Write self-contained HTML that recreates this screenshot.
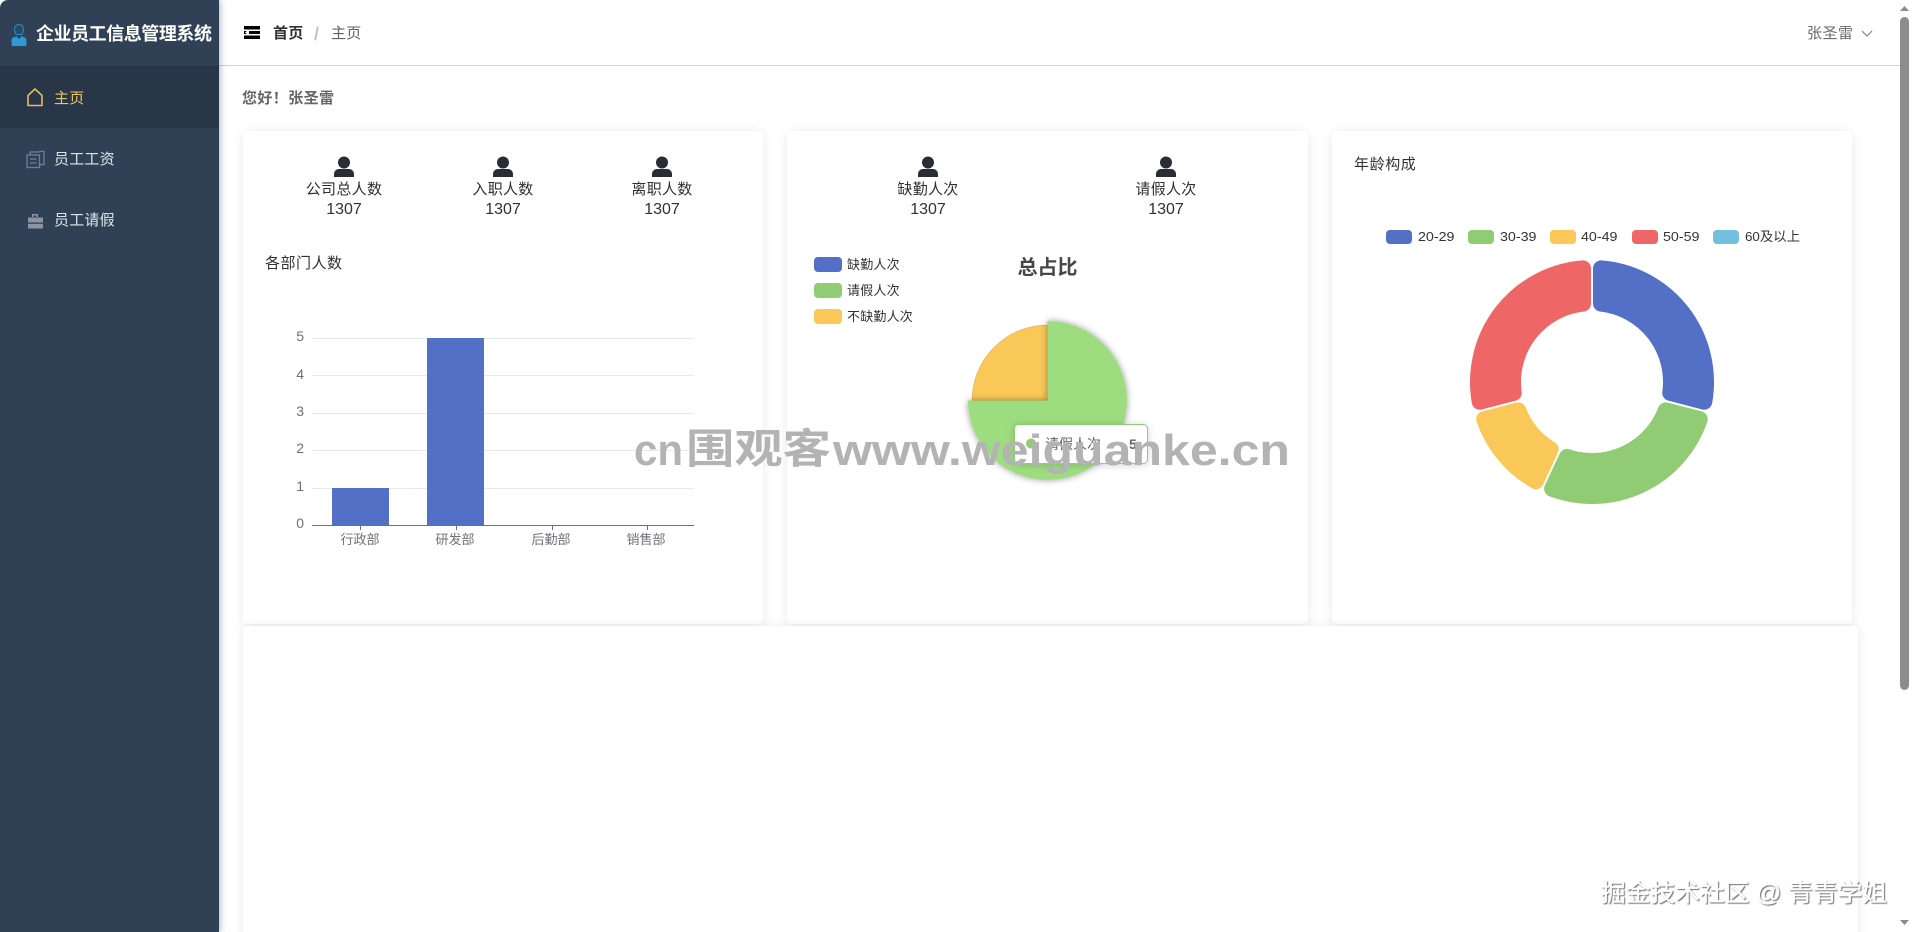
<!DOCTYPE html>
<html lang="zh-CN">
<head>
<meta charset="utf-8">
<title>企业员工信息管理系统</title>
<style>
html,body{margin:0;padding:0;width:1912px;height:932px;overflow:hidden;background:#fff;}
body{position:relative;font-family:"Liberation Sans","Noto Sans CJK SC",sans-serif;color:#303133;}
.abs{position:absolute;white-space:nowrap;}
#side{position:absolute;left:0;top:0;width:219px;height:932px;background:#304156;box-shadow:2px 0 6px rgba(60,80,130,.35);border-top-left-radius:8px;}
#active{position:absolute;left:0;top:66px;width:219px;height:62px;background:#283647;}
#head{position:absolute;left:219px;top:0;width:1681px;height:65px;background:#fff;border-bottom:1px solid #d0d0d0;}
.card{position:absolute;background:#fff;border-radius:4px;box-shadow:0 1px 12px rgba(0,0,0,.09);}
.t15{font-size:15px;line-height:20px;letter-spacing:.3px;}
.n16{font-size:16px;line-height:20px;}
.c{transform:translateX(-50%);text-align:center;}
.menu{font-size:15px;line-height:20px;color:#dfe4ea;letter-spacing:.2px;}
svg{position:absolute;left:0;top:0;}
svg text{font-family:"Liberation Sans","Noto Sans CJK SC",sans-serif;}
</style>
</head>
<body>

<div class="card" style="left:243px;top:131px;width:520px;height:493px"></div>
<div class="card" style="left:787px;top:131px;width:521px;height:493px"></div>
<div class="card" style="left:1332px;top:131px;width:520px;height:493px"></div>
<div class="card" style="left:243px;top:626px;width:1615px;height:330px"></div>

<div id="head"></div>
<div id="side"></div>
<div id="active"></div>

<div class="abs" style="left:36px;top:22px;font-size:18px;line-height:24px;font-weight:bold;color:#fff;letter-spacing:-.45px">企业员工信息管理系统</div>
<div class="abs menu" style="left:54px;top:89px;color:#e8c56a">主页</div>
<div class="abs menu" style="left:54px;top:150px">员工工资</div>
<div class="abs menu" style="left:54px;top:211px">员工请假</div>

<div class="abs t15" style="left:273px;top:24px;font-weight:bold;color:#303133">首页</div>
<div class="abs" style="left:314px;top:23px;color:#c0c4cc;font-weight:bold;font-size:18px;line-height:22px">/</div>
<div class="abs t15" style="left:331px;top:24px;color:#606266">主页</div>
<div class="abs t15" style="left:1807px;top:24px;color:#6b6b6b;letter-spacing:.5px">张圣雷</div>

<div class="abs t15" style="left:242px;top:89px;font-weight:bold;color:#666;letter-spacing:.4px">您好！张圣雷</div>

<div class="abs t15 c" style="left:344px;top:180px">公司总人数</div>
<div class="abs n16 c" style="left:344px;top:200px">1307</div>
<div class="abs t15 c" style="left:503px;top:180px">入职人数</div>
<div class="abs n16 c" style="left:503px;top:200px">1307</div>
<div class="abs t15 c" style="left:662px;top:180px">离职人数</div>
<div class="abs n16 c" style="left:662px;top:200px">1307</div>
<div class="abs t15" style="left:265px;top:254px;letter-spacing:.5px">各部门人数</div>

<div class="abs t15 c" style="left:928px;top:180px">缺勤人次</div>
<div class="abs n16 c" style="left:928px;top:200px">1307</div>
<div class="abs t15 c" style="left:1166px;top:180px">请假人次</div>
<div class="abs n16 c" style="left:1166px;top:200px">1307</div>

<div class="abs t15" style="left:1354px;top:155px;letter-spacing:.6px">年龄构成</div>

<svg width="1912" height="932" viewBox="0 0 1912 932">
  <defs>
    <filter id="ps" x="-30%" y="-30%" width="160%" height="160%">
      <feDropShadow dx="0" dy="0" stdDeviation="3.500" flood-color="#000" flood-opacity=".4"/>
    </filter>
    <filter id="ts" x="-20%" y="-30%" width="140%" height="160%">
      <feDropShadow dx="0" dy="1" stdDeviation="4" flood-color="#000" flood-opacity=".18"/>
    </filter>
    <filter id="jj" x="-5%" y="-20%" width="110%" height="140%">
      <feDropShadow dx="1" dy="1" stdDeviation=".4" flood-color="#555" flood-opacity=".9"/>
    </filter>
  </defs>

  <!-- logo -->
  <g>
    <path d="M19 24.500c-2.800 0-4.500 2-4.500 4.700 0 2 .7 4 1.800 5.300h5.400c1.100-1.300 1.800-3.300 1.800-5.300 0-2.700-1.700-4.700-4.500-4.700z" fill="#2b4a68" stroke="#2a8fcb" stroke-width="1"/>
    <path d="M13 46c-.8 0-1.400-.5-1.400-1.300v-4.500c0-2 1.500-3 3.400-3.500l1.300-.6 2.700 2.900 2.700-2.900 1.300.6c1.900.5 3.400 1.500 3.400 3.500v4.500c0 .8-.6 1.300-1.400 1.300z" fill="#2a9ad8"/>
  </g>

  <!-- menu icons -->
  <path d="M28 105.500V95.500L35 89l7 6.500v10z" fill="none" stroke="#e2bd62" stroke-width="1.600" stroke-linejoin="round"/>
  <g fill="none" stroke="#6f8196" stroke-width="1.300">
    <rect x="27" y="155" width="12.500" height="12.500"/>
    <path d="M30 155v-3h9.500v-.5h4.500v13h-4"/>
    <path d="M30 159h6.500M30 163h6.500"/>
  </g>
  <g fill="#8b94a2">
    <path d="M32 217v-3h6v3h-1.600v-1.500h-2.800V217z"/>
    <rect x="28" y="217.500" width="15" height="5"/>
    <rect x="28" y="223.800" width="15" height="4.700"/>
  </g>

  <!-- hamburger -->
  <g fill="#000">
    <rect x="244" y="26" width="16" height="3.500"/>
    <rect x="244" y="31" width="16" height="3"/>
    <rect x="244" y="35.500" width="16" height="3.500"/>
    <path d="M249 29.500l-4 3 4 3z" fill="#fff"/>
  </g>

  <!-- chevron -->
  <path d="M1862 31l5 5 5-5" fill="none" stroke="#777" stroke-width="1"/>

  <!-- person icons -->
  <g fill="#2a2d33">
    <g><circle cx="344" cy="162.500" r="6"/><path d="M334 177v-3c0-3 2.500-5 5-5h10c2.500 0 5 2 5 5v3z"/></g>
    <g transform="translate(159 0)"><circle cx="344" cy="162.500" r="6"/><path d="M334 177v-3c0-3 2.500-5 5-5h10c2.500 0 5 2 5 5v3z"/></g>
    <g transform="translate(318 0)"><circle cx="344" cy="162.500" r="6"/><path d="M334 177v-3c0-3 2.500-5 5-5h10c2.500 0 5 2 5 5v3z"/></g>
    <g transform="translate(584 0)"><circle cx="344" cy="162.500" r="6"/><path d="M334 177v-3c0-3 2.500-5 5-5h10c2.500 0 5 2 5 5v3z"/></g>
    <g transform="translate(822 0)"><circle cx="344" cy="162.500" r="6"/><path d="M334 177v-3c0-3 2.500-5 5-5h10c2.500 0 5 2 5 5v3z"/></g>
  </g>

  <!-- bar chart -->
  <g stroke="#e6e9f0" stroke-width="1">
    <path d="M312 338.500h382M312 375.500h382M312 413.500h382M312 450.500h382M312 488.500h382"/>
  </g>
  <rect x="332" y="488" width="57" height="37" fill="#5470c6"/>
  <rect x="427" y="338" width="57" height="187" fill="#5470c6"/>
  <g stroke="#6e7079" stroke-width="1">
    <path d="M312 525.500h382M360.500 525v5M456.500 525v5M552.500 525v5M647.500 525v5"/>
  </g>
  <g fill="#6e7079" font-size="14" text-anchor="end">
    <text x="304" y="341">5</text>
    <text x="304" y="379">4</text>
    <text x="304" y="416">3</text>
    <text x="304" y="453">2</text>
    <text x="304" y="491">1</text>
    <text x="304" y="528">0</text>
  </g>
  <g fill="#6e7079" font-size="13" text-anchor="middle">
    <text x="360" y="544">行政部</text>
    <text x="455" y="544">研发部</text>
    <text x="551" y="544">后勤部</text>
    <text x="646" y="544">销售部</text>
  </g>

  <!-- pie legend -->
  <rect x="814" y="257" width="28" height="15" rx="4" fill="#5470c6"/>
  <rect x="814" y="283" width="28" height="15" rx="4" fill="#91cc75"/>
  <rect x="814" y="309" width="28" height="15" rx="4" fill="#fac858"/>
  <g fill="#333" font-size="13" letter-spacing=".2">
    <text x="847" y="269">缺勤人次</text>
    <text x="847" y="295">请假人次</text>
    <text x="847" y="321">不缺勤人次</text>
  </g>
  <text x="1047.500" y="274" text-anchor="middle" font-size="20" font-weight="bold" fill="#464646">总占比</text>

  <!-- pie -->
  <path d="M1047.500 400.500V325A75.500 75.500 0 0 0 972 400.500z" fill="#fac858" stroke="#d9ab4a" stroke-width=".5"/>
  <path d="M1047.500 400.500V321A79.500 79.500 0 1 1 968 400.500z" fill="#9ddd7f" filter="url(#ps)"/>

  <!-- tooltip -->
  <rect x="1014.500" y="424.500" width="133" height="39" rx="4" fill="#fff" stroke="#91cc75" filter="url(#ts)"/>
  <circle cx="1031" cy="443.500" r="5" fill="#91cc75"/>
  <text x="1045" y="449" font-size="14" fill="#666">请假人次</text>
  <text x="1129" y="449" font-size="14" font-weight="bold" fill="#666">5</text>

  <!-- donut legend -->
  <rect x="1386" y="230" width="26" height="14" rx="4" fill="#5470c6"/>
  <rect x="1468" y="230" width="26" height="14" rx="4" fill="#91cc75"/>
  <rect x="1550" y="230" width="26" height="14" rx="4" fill="#fac858"/>
  <rect x="1632" y="230" width="26" height="14" rx="4" fill="#ee6666"/>
  <rect x="1713" y="230" width="26" height="14" rx="4" fill="#73c0de"/>
  <g fill="#333" font-size="13">
    <text x="1418" y="241" textLength="36.500" lengthAdjust="spacingAndGlyphs">20-29</text>
    <text x="1500" y="241" textLength="36.500" lengthAdjust="spacingAndGlyphs">30-39</text>
    <text x="1581" y="241" textLength="36.500" lengthAdjust="spacingAndGlyphs">40-49</text>
    <text x="1663" y="241" textLength="36.500" lengthAdjust="spacingAndGlyphs">50-59</text>
    <text x="1745" y="241" textLength="55" lengthAdjust="spacingAndGlyphs">60及以上</text>
  </g>

  <!-- donut -->
  <g stroke-width="16" stroke-linejoin="round">
    <path d="M1601,268.360A114,114 0 0 1 1704.280,401.730L1670.240,392.940A79,79 0 0 0 1601,303.510Z" fill="#5470c6" stroke="#5470c6"/>
    <path d="M1699.770,419.170A114,114 0 0 1 1552.130,488.810L1566.980,456.930A79,79 0 0 0 1665.730,410.360Z" fill="#91cc75" stroke="#91cc75"/>
    <path d="M1535.810,481.190A114,114 0 0 1 1484.230,419.170L1518.270,410.360A79,79 0 0 0 1550.670,449.320Z" fill="#fac858" stroke="#fac858"/>
    <path d="M1479.720,401.730A114,114 0 0 1 1583,268.360L1583,303.510A79,79 0 0 0 1513.760,392.940Z" fill="#ee6666" stroke="#ee6666"/>
  </g>

  <!-- watermark -->
  <g fill="#b3b3b3" font-weight="bold">
    <text x="634" y="465" font-size="44" textLength="49" lengthAdjust="spacingAndGlyphs">cn</text>
    <text x="686" y="463" font-size="41" textLength="145" lengthAdjust="spacingAndGlyphs">围观客</text>
    <text x="833" y="465" font-size="44" textLength="457" lengthAdjust="spacingAndGlyphs">www.weiguanke.cn</text>
  </g>

  <!-- juejin -->
  <text x="1601" y="901" font-size="24" fill="#fff" stroke="#fff" stroke-width=".2" filter="url(#jj)" textLength="286" lengthAdjust="spacingAndGlyphs">掘金技术社区 @ 青青学姐</text>

  <!-- scrollbar -->
  <rect x="1900" y="17" width="9" height="673" rx="4.500" fill="#8c8c8c"/>
  <path d="M1900 11l4.500-5 4.500 5z" fill="#8c8c8c"/>
  <path d="M1900 920l4.500 5 4.500-5z" fill="#8c8c8c"/>
</svg>
</body>
</html>
